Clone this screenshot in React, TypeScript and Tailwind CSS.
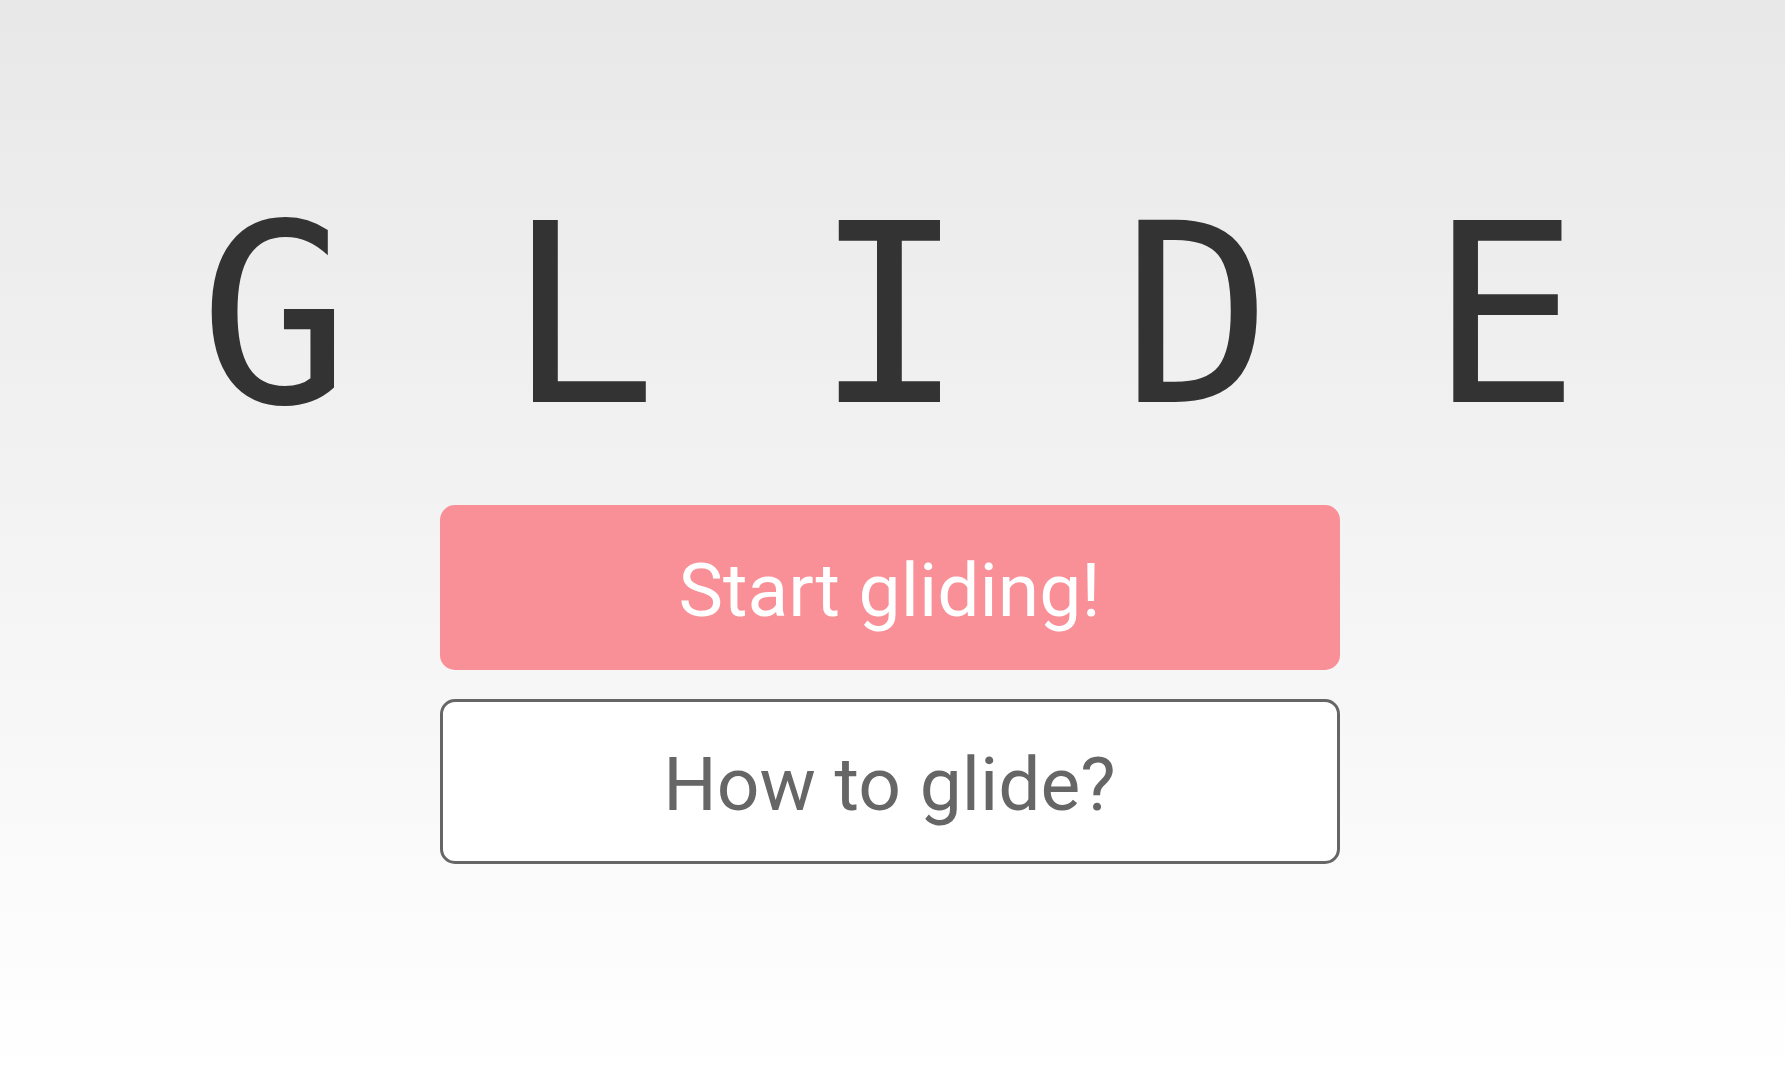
const letters = ["G", "L", "I", "D", "E"];

export default function App() {
  return (
    <div className="min-h-screen w-full bg-gradient-to-b from-[#e8e8e8] to-[#ffffff] flex flex-col items-center pr-[6px]">
      {/* title */}
      <h1 className="mt-[191px] flex justify-center gap-[157px] text-[250px] leading-[250px] text-[#333333] font-['DejaVu_Sans_Mono',monospace] font-normal">
        {letters.map((l) => (
          <span key={l}>{l}</span>
        ))}
      </h1>

      {/* actions */}
      <div className="mt-[64px] w-[900px] flex flex-col gap-[29px] font-['Roboto',sans-serif]">
        <button className="h-[165px] w-full rounded-[15px] bg-[#f98f97] pt-[6px] text-white text-[75px] leading-none">
          Start gliding!
        </button>
        <button className="h-[165px] w-full rounded-[15px] border-[3px] border-[#666666] bg-white pt-[6px] text-[#666666] text-[75px] leading-none">
          How to glide?
        </button>
      </div>
    </div>
  );
}
